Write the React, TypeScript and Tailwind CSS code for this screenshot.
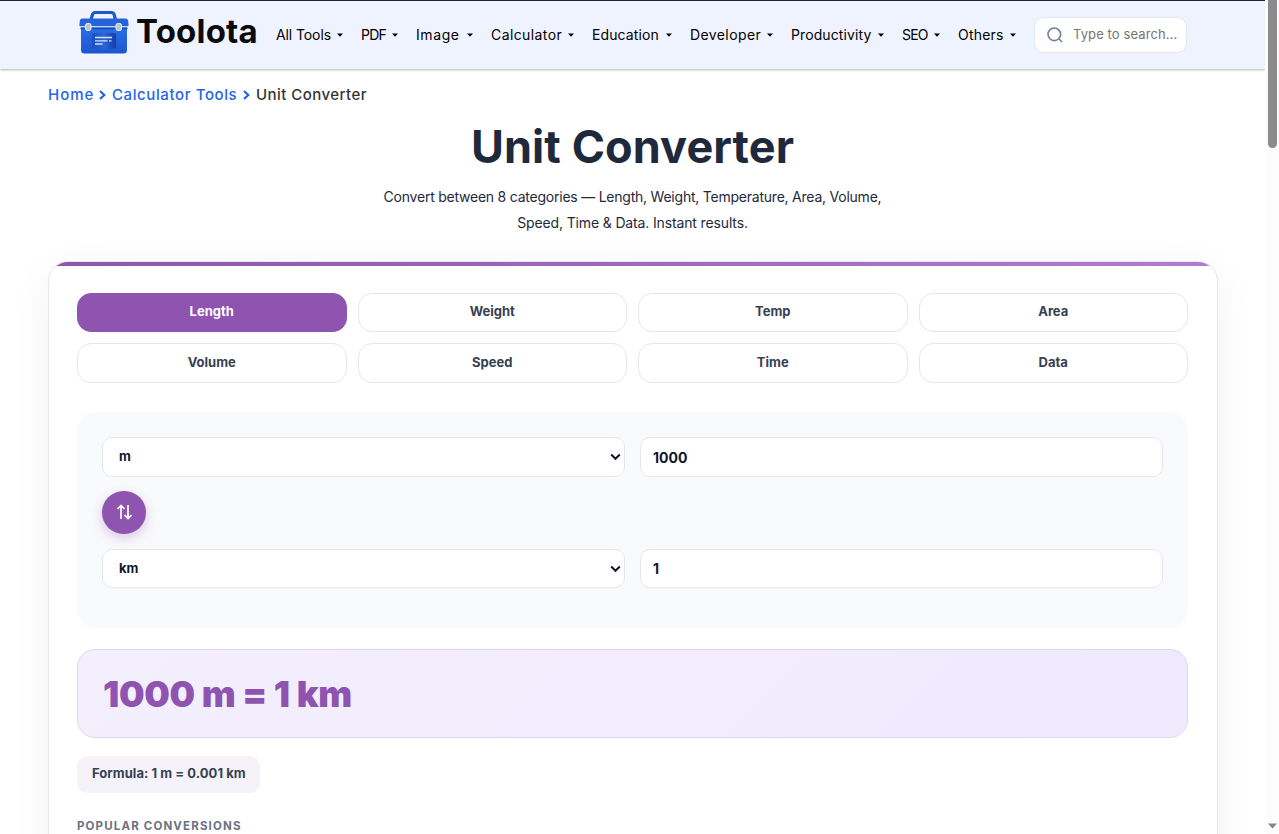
import { useState } from "react";
import clsx from "clsx";

const NAV_ITEMS = [
  { label: "All Tools", className: "w-[61px] tracking-[-0.1px]" },
  { label: "PDF", className: "w-[31px] tracking-[-0.8px]" },
  { label: "Image", className: "w-[51px] tracking-[0.6px]" },
  { label: "Calculator", className: "w-[77px] tracking-[0.4px]" },
  { label: "Education", className: "w-[74px] tracking-[0.1px]" },
  { label: "Developer", className: "w-[77px] tracking-[0.4px]" },
  { label: "Productivity", className: "w-[87px] tracking-[0.1px]" },
  { label: "SEO", className: "w-[32px] tracking-[-0.8px]" },
  { label: "Others", className: "w-[52px] tracking-[0.2px]" },
];

const CATEGORIES = ["Length", "Weight", "Temp", "Area", "Volume", "Speed", "Time", "Data"];

function ToolboxLogo() {
  return (
    <svg width="50" height="44" viewBox="0 0 50 44" className="shrink-0">
      <defs>
        <linearGradient id="box" x1="0" y1="0" x2="0" y2="1">
          <stop offset="0" stopColor="#2a6ee6" />
          <stop offset="1" stopColor="#1d55d0" />
        </linearGradient>
        <linearGradient id="screen" x1="0" y1="0" x2="1" y2="0">
          <stop offset="0" stopColor="#1b4fc0" />
          <stop offset="0.5" stopColor="#2c66d8" />
          <stop offset="1" stopColor="#153f9f" />
        </linearGradient>
      </defs>
      <path d="M12 9 L13.5 3.5 Q14.2 1.5 16.5 1.5 H32 Q34.5 1.5 35.1 3.5 L36.5 9" fill="none" stroke="#2058c8" strokeWidth="3.2" />
      <path d="M2 16 H48 V39 Q48 42.5 44.5 42.5 H5.5 Q2 42.5 2 39 Z" fill="url(#box)" />
      <path d="M3.5 7.5 H46.5 Q49 7.5 49.3 10.500 L49.6 15 H0.4 L0.7 10.500 Q1 7.5 3.5 7.5 Z" fill="#2463d8" />
      <rect x="1" y="15" width="48" height="1.6" fill="#c3d5f9" />
      <rect x="1.5" y="16.6" width="47" height="1.6" fill="#174ab5" />
      <rect x="6.5" y="12.5" width="5.5" height="7" rx="1.8" fill="#bfc5d0" stroke="#eef1f6" strokeWidth="1" />
      <rect x="37" y="12.5" width="5.5" height="7" rx="1.8" fill="#bfc5d0" stroke="#eef1f6" strokeWidth="1" />
      <rect x="13" y="22" width="24" height="15.5" rx="2" fill="url(#screen)" />
      <path d="M16 26.5 H33 M16 29.8 H28.5 M30 29.8 H32.5 M16 33 H23.5" stroke="#d3e1fb" strokeWidth="1.3" />
    </svg>
  );
}

function Chevron() {
  return (
    <svg width="7" height="10" viewBox="0 0 7 10" fill="none" stroke="#2563eb" strokeWidth="2.2">
      <path d="M1 1 L5.3 5 L1 9" />
    </svg>
  );
}

function Header() {
  return (
    <header className="flex h-[69px] items-center border-t border-[#20222e] bg-[#eff3ff] pl-[79px] shadow-[0_1px_2px_rgba(0,0,0,0.3)]">
      <div className="flex w-[197px] items-start">
        <div className="-mt-1">
          <ToolboxLogo />
        </div>
        <span className="-mt-[5px] ml-[7px] font-['Inter'] text-[33px] leading-[42px] font-bold tracking-[0.2px] text-[#0b0b0d]">
          Toolota
        </span>
      </div>
      <nav className="flex gap-[18px]">
        {NAV_ITEMS.map((item) => (
          <a key={item.label} href="#" className="flex items-center text-black">
            <span className={clsx("font-['Inter'] text-[14px] leading-5 whitespace-nowrap", item.className)}>{item.label}</span>
            <svg width="6" height="4" viewBox="0 0 6 4">
              <path d="M0 0.5 H6 L3 3.8 Z" />
            </svg>
          </a>
        ))}
      </nav>
      <div className="ml-[18px] flex h-[36px] w-[153px] items-center rounded-[10px] border border-[#e2e8f0] bg-white pl-3">
        <svg width="16" height="16" viewBox="0 0 16 16" fill="none" stroke="#718096" strokeWidth="1.6">
          <circle cx="7.3" cy="7.3" r="6.3" />
          <path d="M11.8 11.8 L15 15" />
        </svg>
        <span className="ml-[10px] font-['Inter'] text-[13px] tracking-[0.1px] whitespace-nowrap text-[#757575]">Type to search...</span>
      </div>
    </header>
  );
}

function UnitSelect({ unit, className }: { unit: string; className?: string }) {
  return (
    <div className={clsx("flex items-center justify-between rounded-[10px] border border-[#e5e7eb] bg-white pr-[3px] pl-4", className)}>
      <span className="font-['Inter'] text-[13px] font-bold text-[#0f172a]">{unit}</span>
      <svg width="11" height="8" viewBox="0 0 11 8" fill="none" stroke="#0f172a" strokeWidth="2">
        <path d="M1.2 1.5 L5.5 5.8 L9.8 1.5" />
      </svg>
    </div>
  );
}

function ValueField({ value, className }: { value: string; className?: string }) {
  return (
    <div className={clsx("flex items-center rounded-[10px] border border-[#e5e7eb] bg-white pl-3", className)}>
      <span className="font-['Inter'] text-[14px] font-bold text-[#0f172a]">{value}</span>
    </div>
  );
}

function App() {
  const [active, setActive] = useState("Length");

  return (
    <div className="flex h-[834px] overflow-hidden bg-white">
      <div className="w-[1265px] shrink-0">
        <Header />

        <div className="px-12">
          <div className="mt-[14px] flex h-6 items-center font-['Inter'] text-[15px] font-medium whitespace-nowrap">
            <a href="#" className="w-[51px] tracking-[1px] text-[#2563eb]">Home</a>
            <Chevron />
            <a href="#" className="ml-[6px] w-[131px] tracking-[0.6px] text-[#2563eb]">Calculator Tools</a>
            <Chevron />
            <span className="ml-[6px] tracking-[0.45px] text-[#333]">Unit Converter</span>
          </div>

          <h1 className="mt-[13px] text-center font-['Inter'] text-[45px] leading-[54px] font-bold tracking-[0.1px] text-[#1e293b]">
            Unit Converter
          </h1>
          <div className="mt-[10px] text-center font-['Inter'] text-[14px] leading-[26px] text-[#1e293b]">
            <p className="tracking-[-0.23px]">Convert between 8 categories — Length, Weight, Temperature, Area, Volume,</p>
            <p className="tracking-[-0.14px]">Speed, Time &amp; Data. Instant results.</p>
          </div>

          {/* Converter card */}
          <main className="relative mt-[25px] h-[620px] w-[1170px] rounded-[20px] border border-[#e9e5f5] bg-white pt-[30px] pr-[29px] pl-7 shadow-[0_10px_40px_rgba(0,0,0,0.06)]">
            <div className="absolute inset-0 overflow-hidden rounded-[19px]">
              <div className="h-1 bg-gradient-to-r from-[#8e54af] to-[#b07cd0]" />
            </div>

            <div className="relative grid grid-cols-4 grid-rows-[39px_40px] gap-[11px] pt-px">
              {CATEGORIES.map((category) => (
                <button
                  key={category}
                  onClick={() => setActive(category)}
                  className={clsx(
                    "rounded-[14px] border pb-px font-['Inter'] text-[13px] font-bold",
                    active === category ? "border-[#8e54af] bg-[#8e54af] text-white" : "border-[#e5e7eb] bg-white text-[#374151]",
                  )}
                >
                  {category}
                </button>
              ))}
            </div>

            <section className="relative mt-[29px] h-[216px] rounded-[20px] bg-[#f9fafc] px-[25px] pt-[25px]">
              <div className="grid grid-cols-2 gap-[15px]">
                <UnitSelect unit="m" className="h-10" />
                <ValueField value="1000" className="h-10" />
              </div>
              <button className="mt-[14px] mb-[15px] flex h-[43px] w-11 items-center justify-center rounded-full bg-[#8e54af] pb-[2px] shadow-[0_4px_12px_rgba(142,84,175,0.3)]">
                <svg width="16" height="16" viewBox="0 0 16 16" fill="none" stroke="white" strokeWidth="1.7">
                  <path d="M5 15 V2 M1.5 5 L5 1.5 L8.5 5 M12 1 V14 M8.5 11 L12 14.5 L15.5 11" />
                </svg>
              </button>
              <div className="grid grid-cols-2 gap-[15px]">
                <UnitSelect unit="km" className="h-[39px]" />
                <ValueField value="1" className="h-[39px]" />
              </div>
            </section>

            <section className="relative mt-[21px] flex h-[89px] items-center rounded-[18px] border border-[#e0d6ee] bg-[linear-gradient(135deg,#f4effd,#efe9fe)] pl-[25px]">
              <span className="font-['Inter'] text-[36px] leading-none font-black tracking-[-0.3px] whitespace-nowrap text-[#8e54af]">1000 m = 1 km</span>
            </section>

            <div className="relative mt-[18px] flex h-[37px] w-[183px] items-center rounded-[10px] bg-[#f5f2f9] pb-[2px] pl-[15px] font-['Inter'] text-[13px] font-bold tracking-[0.05px] whitespace-nowrap text-[#374151]">
              Formula: 1 m = 0.001 km
            </div>
            <h2 className="relative mt-[25px] font-['Inter'] text-[11.5px] leading-4 font-bold tracking-[1.15px] text-[#6b7280]">POPULAR CONVERSIONS</h2>
          </main>
        </div>
      </div>

      {/* Scrollbar */}
      <div className="flex w-[14px] shrink-0 flex-col items-center justify-between bg-[#fcfcfc] pb-[5px] pl-[1px]">
        <div className="h-[148px] w-[9px] rounded-b-[5px] bg-[#8b8b8b]" />
        <svg width="9" height="6" viewBox="0 0 9 6" fill="#858585">
          <path d="M0 0.5 H9 L4.5 5.5 Z" />
        </svg>
      </div>
    </div>
  );
}

export default App;
